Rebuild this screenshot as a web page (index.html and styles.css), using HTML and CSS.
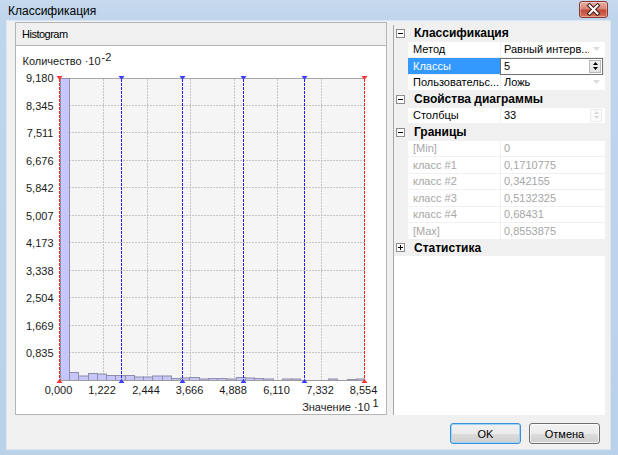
FILE: index.html
```html
<!DOCTYPE html>
<html>
<head>
<meta charset="utf-8">
<title>Классификация</title>
<link rel="stylesheet" href="styles.css">
</head>
<body>
<div class="window">
  <div class="titlebar">
    <span class="title">Классификация</span>
    <div class="close">
      <svg width="29" height="17" viewBox="0 0 29 17">
        <path d="M10.5 4.5 L18.5 12.5 M18.5 4.5 L10.5 12.5" stroke="#3b1a14" stroke-width="4" stroke-linecap="square"/>
        <path d="M10.5 4.5 L18.5 12.5 M18.5 4.5 L10.5 12.5" stroke="#ffffff" stroke-width="2" stroke-linecap="square"/>
      </svg>
    </div>
  </div>
  <div class="client">
    <div class="main">
      <div class="panel">
        <div class="panel-header">Histogram</div>
        <div class="panel-body">
          <svg class="chart" width="370" height="368" viewBox="16 46 370 368">
            <text class="axis-title" x="22.5" y="65">Количество ·10<tspan dx="1" dy="-4">-2</tspan></text>
            <rect x="60" y="78" width="305" height="302" fill="#f5f5f5"/>
            <g class="grid-v">
              <line x1="103.5" y1="79" x2="103.5" y2="380"/>
              <line x1="147.5" y1="79" x2="147.5" y2="380"/>
              <line x1="190.5" y1="79" x2="190.5" y2="380"/>
              <line x1="234.5" y1="79" x2="234.5" y2="380"/>
              <line x1="277.5" y1="79" x2="277.5" y2="380"/>
              <line x1="321.5" y1="79" x2="321.5" y2="380"/>
            </g>
            <g class="grid-h">
              <line x1="60" y1="105.5" x2="365" y2="105.5"/>
              <line x1="60" y1="132.5" x2="365" y2="132.5"/>
              <line x1="60" y1="160.5" x2="365" y2="160.5"/>
              <line x1="60" y1="187.5" x2="365" y2="187.5"/>
              <line x1="60" y1="215.5" x2="365" y2="215.5"/>
              <line x1="60" y1="242.5" x2="365" y2="242.5"/>
              <line x1="60" y1="270.5" x2="365" y2="270.5"/>
              <line x1="60" y1="297.5" x2="365" y2="297.5"/>
              <line x1="60" y1="325.5" x2="365" y2="325.5"/>
              <line x1="60" y1="352.5" x2="365" y2="352.5"/>
            </g>
            <line class="frame-line" x1="60" y1="78.5" x2="365" y2="78.5"/>
            <g class="bars">
              <rect x="60.5" y="78.5" width="9" height="302"/>
              <rect x="69.5" y="372.5" width="9" height="8"/>
              <rect x="78.5" y="376" width="10" height="4.5"/>
              <rect x="88.5" y="373.5" width="9" height="7"/>
              <rect x="97.5" y="374" width="9" height="6.5"/>
              <rect x="106.5" y="375.5" width="9" height="5"/>
              <rect x="115.5" y="375.5" width="10" height="5"/>
              <rect x="125.5" y="375.5" width="9" height="5"/>
              <rect x="134.5" y="377" width="9" height="3.5"/>
              <rect x="143.5" y="377" width="9" height="3.5"/>
              <rect x="152.5" y="376" width="10" height="4.5"/>
              <rect x="162.5" y="376" width="9" height="4.5"/>
              <rect x="171.5" y="378.5" width="9" height="2"/>
              <rect x="180.5" y="378" width="9" height="2.5"/>
              <rect x="189.5" y="377.5" width="10" height="3"/>
              <rect x="199.5" y="379" width="9" height="1.5"/>
              <rect x="208.5" y="378.5" width="9" height="2"/>
              <rect x="217.5" y="378.5" width="9" height="2"/>
              <rect x="226.5" y="379" width="10" height="1.5"/>
              <rect x="236.5" y="377.5" width="9" height="3"/>
              <rect x="245.5" y="378" width="9" height="2.5"/>
              <rect x="254.5" y="378.5" width="9" height="2"/>
              <rect x="263.5" y="379" width="10" height="1.5"/>
              <rect x="282.5" y="379" width="9" height="1.5"/>
              <rect x="291.5" y="379" width="9" height="1.5"/>
              <rect x="328.5" y="379" width="9" height="1.5"/>
              <rect x="347.5" y="379.5" width="9" height="1"/>
              <rect x="356.5" y="379" width="8" height="1.5"/>
            </g>
            <line class="axis-line" x1="60" y1="380.5" x2="365" y2="380.5"/>
            <g class="bound blue">
              <line x1="121.5" y1="79" x2="121.5" y2="380"/>
              <line x1="182.5" y1="79" x2="182.5" y2="380"/>
              <line x1="243.5" y1="79" x2="243.5" y2="380"/>
              <line x1="304.5" y1="79" x2="304.5" y2="380"/>
            </g>
            <g class="bound red">
              <line x1="59.5" y1="79" x2="59.5" y2="380"/>
              <line x1="364.5" y1="79" x2="364.5" y2="380"/>
            </g>
            <g class="marker blue-fill">
              <polygon points="118.5,76 124.5,76 121.5,80"/>
              <polygon points="179.5,76 185.5,76 182.5,80"/>
              <polygon points="240.5,76 246.5,76 243.5,80"/>
              <polygon points="301.5,76 307.5,76 304.5,80"/>
              <polygon points="118.5,383 124.5,383 121.5,379"/>
              <polygon points="179.5,383 185.5,383 182.5,379"/>
              <polygon points="240.5,383 246.5,383 243.5,379"/>
              <polygon points="301.5,383 307.5,383 304.5,379"/>
            </g>
            <g class="marker red-fill">
              <polygon points="56.5,76 62.5,76 59.5,80"/>
              <polygon points="361.5,76 367.5,76 364.5,80"/>
              <polygon points="56.5,383 62.5,383 59.5,379"/>
              <polygon points="361.5,383 367.5,383 364.5,379"/>
            </g>
            <g class="ylabels">
              <text x="53.5" y="82">9,180</text>
              <text x="53.5" y="109.5">8,345</text>
              <text x="53.5" y="137">7,511</text>
              <text x="53.5" y="164.5">6,676</text>
              <text x="53.5" y="192">5,842</text>
              <text x="53.5" y="219.5">5,007</text>
              <text x="53.5" y="247">4,173</text>
              <text x="53.5" y="274.5">3,338</text>
              <text x="53.5" y="302">2,504</text>
              <text x="53.5" y="329.5">1,669</text>
              <text x="53.5" y="356.5">0,835</text>
            </g>
            <g class="xlabels">
              <text x="58.5" y="393.5">0,000</text>
              <text x="102" y="393.5">1,222</text>
              <text x="146" y="393.5">2,444</text>
              <text x="189.5" y="393.5">3,666</text>
              <text x="233" y="393.5">4,888</text>
              <text x="276.5" y="393.5">6,110</text>
              <text x="320" y="393.5">7,332</text>
              <text x="363.5" y="393.5">8,554</text>
            </g>
            <text class="axis-title end" x="378.5" y="411">Значение ·10<tspan dx="2.5" dy="-4.5">1</tspan></text>
          </svg>
        </div>
      </div>
      <div class="grid">
        <div class="row cat">
          <svg class="toggle" width="9" height="9" viewBox="0 0 9 9"><rect x="0.5" y="0.5" width="8" height="8" fill="#fff" stroke="#8c8c8c"/><line x1="2" y1="4.5" x2="7" y2="4.5" stroke="#000"/></svg>
          <span class="cat-label">Классификация</span>
        </div>
        <div class="row prop">
          <span class="gutter"></span><span class="name">Метод</span>
          <span class="value"><span class="text">Равный интерв...</span><span class="drop"><svg width="7" height="4" viewBox="0 0 7 4"><polygon points="0,0 7,0 3.5,4" fill="#dcdcdc"/></svg></span></span>
        </div>
        <div class="row prop selected">
          <span class="gutter"></span><span class="name">Классы</span>
          <span class="value edit"><span class="text">5</span><span class="spin"><svg width="5" height="3" viewBox="0 0 5 3"><polygon points="0,3 5,3 2.5,0" fill="#000"/></svg><svg width="5" height="3" viewBox="0 0 5 3"><polygon points="0,0 5,0 2.5,3" fill="#000"/></svg></span></span>
        </div>
        <div class="row prop">
          <span class="gutter"></span><span class="name">Пользовательс...</span>
          <span class="value"><span class="text">Ложь</span><span class="drop"><svg width="7" height="4" viewBox="0 0 7 4"><polygon points="0,0 7,0 3.5,4" fill="#dcdcdc"/></svg></span></span>
        </div>
        <div class="row cat">
          <svg class="toggle" width="9" height="9" viewBox="0 0 9 9"><rect x="0.5" y="0.5" width="8" height="8" fill="#fff" stroke="#8c8c8c"/><line x1="2" y1="4.5" x2="7" y2="4.5" stroke="#000"/></svg>
          <span class="cat-label">Свойства диаграммы</span>
        </div>
        <div class="row prop">
          <span class="gutter"></span><span class="name">Столбцы</span>
          <span class="value"><span class="text">33</span><span class="spin faded"><svg width="5" height="3" viewBox="0 0 5 3"><polygon points="0,3 5,3 2.5,0" fill="#d8d8d8"/></svg><svg width="5" height="3" viewBox="0 0 5 3"><polygon points="0,0 5,0 2.5,3" fill="#d8d8d8"/></svg></span></span>
        </div>
        <div class="row cat">
          <svg class="toggle" width="9" height="9" viewBox="0 0 9 9"><rect x="0.5" y="0.5" width="8" height="8" fill="#fff" stroke="#8c8c8c"/><line x1="2" y1="4.5" x2="7" y2="4.5" stroke="#000"/></svg>
          <span class="cat-label">Границы</span>
        </div>
        <div class="row prop disabled"><span class="gutter"></span><span class="name">[Min]</span><span class="value"><span class="text">0</span></span></div>
        <div class="row prop disabled"><span class="gutter"></span><span class="name">класс #1</span><span class="value"><span class="text">0,1710775</span></span></div>
        <div class="row prop disabled"><span class="gutter"></span><span class="name">класс #2</span><span class="value"><span class="text">0,342155</span></span></div>
        <div class="row prop disabled"><span class="gutter"></span><span class="name">класс #3</span><span class="value"><span class="text">0,5132325</span></span></div>
        <div class="row prop disabled"><span class="gutter"></span><span class="name">класс #4</span><span class="value"><span class="text">0,68431</span></span></div>
        <div class="row prop disabled"><span class="gutter"></span><span class="name">[Max]</span><span class="value"><span class="text">0,8553875</span></span></div>
        <div class="row cat">
          <svg class="toggle" width="9" height="9" viewBox="0 0 9 9"><rect x="0.5" y="0.5" width="8" height="8" fill="#fff" stroke="#8c8c8c"/><line x1="2" y1="4.5" x2="7" y2="4.5" stroke="#000"/><line x1="4.5" y1="2" x2="4.5" y2="7" stroke="#000"/></svg>
          <span class="cat-label">Статистика</span>
        </div>
      </div>
    </div>
    <div class="buttons">
      <button class="btn default">OK</button>
      <button class="btn">Отмена</button>
    </div>
  </div>
</div>
</body>
</html>
```

FILE: styles.css
```css
html, body {
  margin: 0;
  padding: 0;
}
body {
  width: 618px;
  height: 455px;
  overflow: hidden;
  font-family: "Liberation Sans", Arial, sans-serif;
  font-size: 11px;
  color: #000;
  background: #bcd3eb;
}
.window {
  width: 618px;
  height: 455px;
  display: flex;
  flex-direction: column;
  background: linear-gradient(180deg, #c6d9ee 0px, #bfd5ec 21px, #bad1ea 100%);
}
.titlebar {
  height: 21px;
  flex: none;
  display: flex;
  align-items: center;
  padding-left: 8px;
}
.title {
  font-size: 12px;
  color: #000;
  padding-top: 1px;
}
.close {
  margin-left: auto;
  margin-right: 10px;
  align-self: flex-start;
  margin-top: 1px;
  width: 29px;
  height: 17px;
  box-sizing: border-box;
  border: 1px solid #8a3b30;
  border-radius: 3px;
  background: linear-gradient(180deg, #e8b1a5 0%, #d98577 45%, #c24a38 55%, #d7735c 100%);
  box-shadow: inset 0 0 0 1px rgba(255,255,255,0.35);
  display: flex;
}
.close svg {
  margin: -1px;
}
.client {
  flex: 1;
  margin: 0 8px 6px 7px;
  background: #f0f0f0;
  box-shadow: 0 0 0 1px #dce7f4;
  display: flex;
  flex-direction: column;
}
.main {
  display: flex;
  gap: 6px;
  padding: 1px 5px 0 8px;
  height: 393px;
}
.panel {
  width: 372px;
  flex: none;
  box-sizing: border-box;
  border: 1px solid #b4b4b4;
  display: flex;
  flex-direction: column;
}
.panel-header {
  height: 22px;
  flex: none;
  border-bottom: 1px solid #b4b4b4;
  background: #f0f0f0;
  display: flex;
  align-items: center;
  padding-left: 6px;
  font-size: 11px;
  letter-spacing: -0.5px;
}
.panel-body {
  flex: 1;
  background: #fff;
  overflow: hidden;
}
.chart {
  display: block;
  font-family: "Liberation Sans", Arial, sans-serif;
  font-size: 11px;
}
.chart text {
  fill: #1a1a1a;
}
.axis-title.end {
  text-anchor: end;
}
.ylabels text {
  text-anchor: end;
}
.xlabels text {
  text-anchor: middle;
}
.grid-v line, .grid-h line {
  stroke: #c4c4c4;
  stroke-width: 1;
  stroke-dasharray: 2 1;
}
.frame-line {
  stroke: #a8a8a8;
}
.axis-line {
  stroke: #9c9c9c;
}
.bars rect {
  fill: #c6c6fa;
  stroke: #8e8ea8;
  stroke-width: 1;
}
.bound line {
  stroke-width: 1;
  stroke-dasharray: 3 1;
}
.bound.blue line {
  stroke: #1e1eff;
}
.bound.red line {
  stroke: #ff2020;
}
.blue-fill polygon {
  fill: #3c3cff;
}
.red-fill polygon {
  fill: #ff3030;
}
.grid {
  width: 212px;
  flex: none;
  box-sizing: border-box;
  margin-top: 3px;
  height: 390px;
  background: #fff;
  border-left: 1px solid #a8a8a8;
  display: flex;
  flex-direction: column;
}
.row {
  height: 16.5px;
  flex: none;
  display: flex;
  align-items: stretch;
}
.cat {
  background: #f0f0f0;
  align-items: center;
}
.toggle {
  margin-left: 2px;
  flex: none;
}
.cat-label {
  margin-left: 9px;
  font-weight: bold;
  font-size: 12px;
  white-space: nowrap;
}
.prop {
  background: #f0f0f0;
}
.gutter {
  width: 14px;
  flex: none;
}
.name {
  width: 92px;
  flex: none;
  background: #fff;
  margin-bottom: 1px;
  padding-left: 5px;
  box-sizing: border-box;
  white-space: nowrap;
  overflow: hidden;
  display: flex;
  align-items: center;
}
.value {
  flex: 1;
  margin-left: 1px;
  margin-bottom: 1px;
  background: #fff;
  display: flex;
  align-items: center;
  padding-left: 3px;
  min-width: 0;
}
.value .text {
  flex: 1;
  white-space: nowrap;
  overflow: hidden;
}
.drop {
  width: 14px;
  margin-right: 2px;
  align-self: stretch;
  display: flex;
  align-items: center;
  justify-content: center;
}
.selected .name {
  background: #3399ff;
  color: #fff;
}
.value.edit {
  box-sizing: border-box;
  border: 1px solid #707070;
  margin-left: 0;
  margin-bottom: 0;
  margin-right: 2px;
  padding-left: 3px;
}
.spin {
  width: 12px;
  align-self: stretch;
  box-sizing: border-box;
  display: flex;
  flex-direction: column;
  align-items: center;
  justify-content: center;
  gap: 2px;
  margin: 1px 1px 1px 0;
  border: 1px solid #b8b8b8;
  background: linear-gradient(180deg, #f4f4f4, #e2e2e2);
}
.spin svg {
  display: block;
}
.spin.faded {
  border-color: #ececec;
  background: #fbfbfb;
  margin-right: 3px;
}
.disabled {
  color: #a6a6a6;
}
.buttons {
  display: flex;
  justify-content: flex-end;
  gap: 8px;
  padding: 8px 10px 0 0;
}
.btn {
  width: 71px;
  height: 21px;
  box-sizing: border-box;
  font-family: "Liberation Sans", Arial, sans-serif;
  font-size: 11px;
  color: #000;
  border: 1px solid #707070;
  border-radius: 3px;
  background: linear-gradient(180deg, #f2f2f2 0%, #ebebeb 50%, #dddddd 51%, #cfcfcf 100%);
  box-shadow: inset 0 0 0 1px rgba(255,255,255,0.7);
  padding: 0;
}
.btn.default {
  border-color: #3c8fd8;
  box-shadow: inset 0 0 0 1px #9fd4f5;
}
```
